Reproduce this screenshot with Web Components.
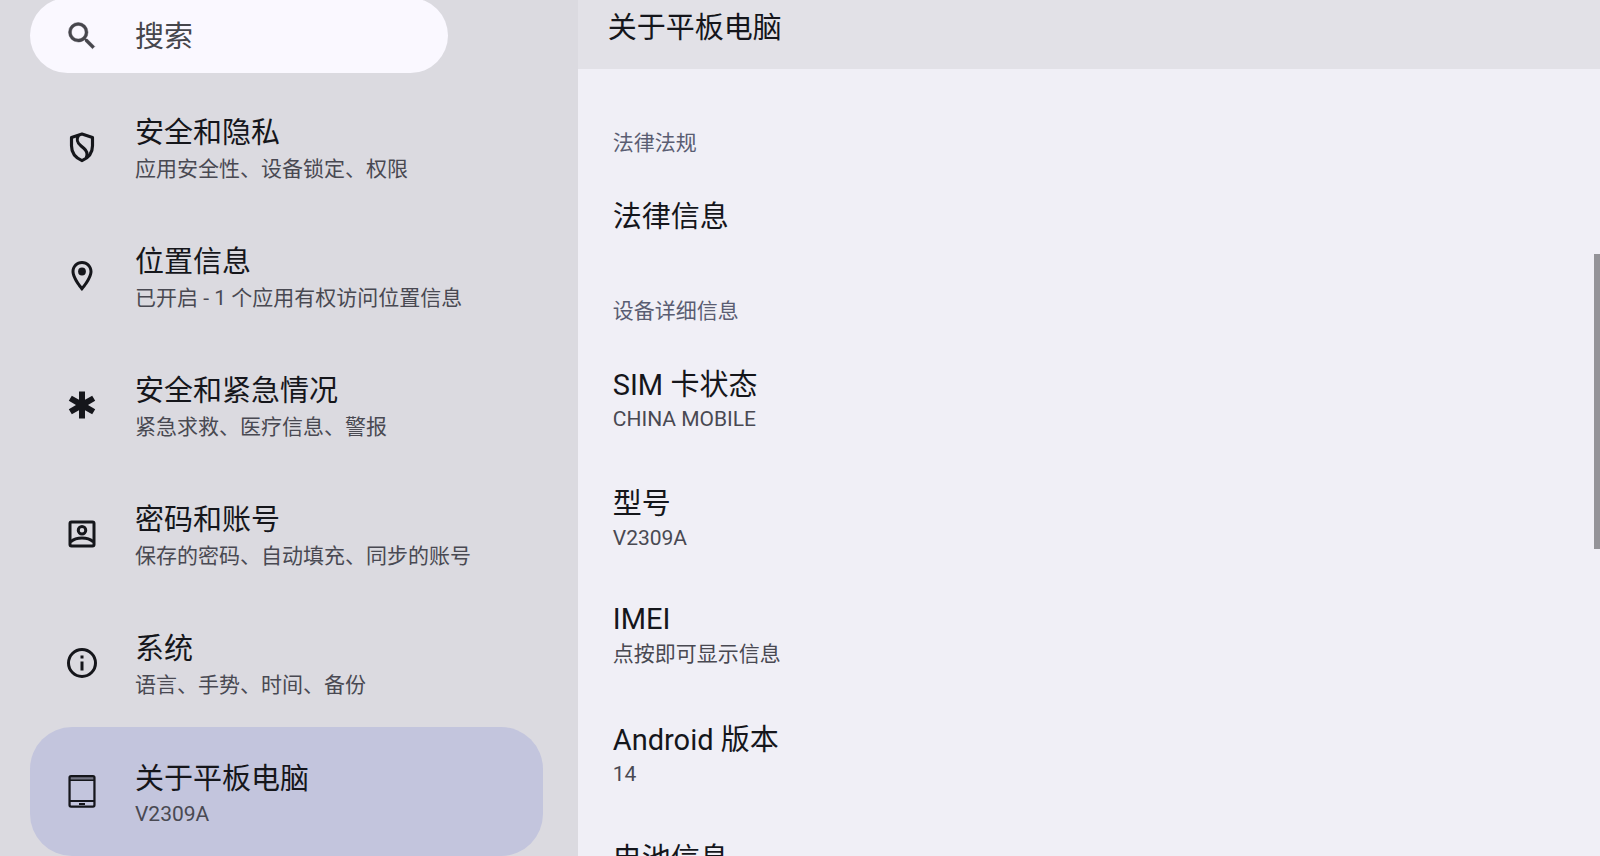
<!DOCTYPE html>
<html lang="zh-CN">
<head>
<meta charset="utf-8">
<meta name="viewport" content="width=device-width, initial-scale=1">
<title>关于平板电脑</title>
<style>
  html, body { margin: 0; height: 100%; overflow: hidden; }
  body {
    --title: 29px;
    --body: 21px;
    --ink: #15161b;
    --muted: #494952;
    font-family: Roboto, "Noto Sans CJK SC", sans-serif;
    color: var(--ink);
  }
</style>
</head>
<body>
<settings-app>
  <settings-search slot="side" label="搜索"></settings-search>
  <nav-item slot="side" icon="shield" heading="安全和隐私">应用安全性、设备锁定、权限</nav-item>
  <nav-item slot="side" icon="pin" heading="位置信息">已开启 - 1 个应用有权访问位置信息</nav-item>
  <nav-item slot="side" icon="emergency" heading="安全和紧急情况">紧急求救、医疗信息、警报</nav-item>
  <nav-item slot="side" icon="account" heading="密码和账号">保存的密码、自动填充、同步的账号</nav-item>
  <nav-item slot="side" icon="info" heading="系统">语言、手势、时间、备份</nav-item>
  <nav-item slot="side" icon="tablet" heading="关于平板电脑" selected latin-note>V2309A</nav-item>

  <span slot="heading">关于平板电脑</span>
  <pref-section label="法律法规">
    <pref-row heading="法律信息"></pref-row>
  </pref-section>
  <pref-section label="设备详细信息">
    <pref-row heading="SIM 卡状态" latin-note>CHINA MOBILE</pref-row>
    <pref-row heading="型号" latin-note>V2309A</pref-row>
    <pref-row heading="IMEI" latin-heading>点按即可显示信息</pref-row>
    <pref-row heading="Android 版本" latin-note>14</pref-row>
    <pref-row heading="电池信息"></pref-row>
  </pref-section>
</settings-app>

<script>
const ICONS = {
  search: '<path fill="currentColor" stroke="currentColor" stroke-width=".3" d="M15.5 14h-.79l-.28-.27A6.47 6.47 0 0 0 16 9.5 6.5 6.5 0 1 0 9.5 16c1.61 0 3.09-.59 4.23-1.57l.27.28v.79l5 4.99L20.49 19l-4.99-5zm-6 0C7.01 14 5 11.99 5 9.5S7.01 5 9.5 5 14 7.01 14 9.5 11.99 14 9.5 14z"/>',
  shield: '<g fill="none" stroke="currentColor" stroke-width="2.100" stroke-linejoin="round"><path d="M12 3.400 5 5.600v5.600c0 4.600 2.600 8 7 9.900 4.400-1.900 7-5.300 7-9.900V5.600z"/><path d="M9.600 4.200c-1.500 3.100-1 5 1.800 7.200l1.800 1.400c2.300 1.900 2.900 3.500 1.700 6.300"/></g>',
  pin: '<path fill="currentColor" d="M12 2C8.13 2 5 5.13 5 9c0 5.25 7 13 7 13s7-7.75 7-13c0-3.87-3.13-7-7-7zM7 9c0-2.76 2.24-5 5-5s5 2.24 5 5c0 2.88-2.88 7.19-5 9.88C9.92 16.21 7 11.85 7 9z"/><circle cx="12" cy="9" r="2.6" fill="currentColor"/>',
  emergency: '<path fill="currentColor" d="M20.79 9.23l-2-3.46L14 8.54V3h-4v5.54L5.21 5.77l-2 3.46L8 12l-4.79 2.77 2 3.46L10 15.46V21h4v-5.54l4.79 2.77 2-3.46L16 12z"/>',
  account: '<g fill="none" stroke="currentColor" stroke-width="2"><rect x="4" y="4" width="16" height="16" rx="1"/><circle cx="12" cy="9.5" r="2.5"/><path d="M4.4 17.2C6.300 15.600 9 14.700 12 14.700s5.700.9 7.600 2.500"/></g>',
  info: '<circle cx="12" cy="12" r="9" fill="none" stroke="currentColor" stroke-width="2"/><path fill="currentColor" d="M11 7h2v2h-2zm0 4h2v6h-2z"/>',
  tablet: '<rect x="3.700" y="1.400" width="16.600" height="20.300" rx="1" fill="none" stroke="currentColor" stroke-width="1.500"/><path fill="currentColor" fill-opacity=".45" d="M4 2h16v2H4z"/><path fill="currentColor" d="M3.500 3.600h17v1.100h-17zm0 13.700h17v1.300h-17zM10 19.400h4v1.200h-4z"/>'
};

const svg = name => `<svg viewBox="0 0 24 24" aria-hidden="true">${ICONS[name]}</svg>`;

// Heading and note lines, shared by the navigation and the preference rows.
const textCss = `
  .heading, .note { display: block; white-space: nowrap; }
  .heading { font-size: var(--title); line-height: 42px; color: var(--ink); }
  .note { font-size: var(--body); line-height: 28px; color: var(--muted); }
  :host([latin-note]) .note { line-height: 26px; }
`;

class Base extends HTMLElement {
  connectedCallback() {
    if (!this.shadowRoot) this.attachShadow({ mode: 'open' }).innerHTML = this.render();
  }
}

customElements.define('settings-app', class extends Base {
  render() {
    return `<style>
      :host { display: grid; grid-template-columns: 13fr 23fr; height: 100vh; overflow: hidden; background: #f0eff6; }
      nav { background: #dbdae0; overflow: hidden; }
      main { position: relative; overflow: hidden; }
      header { box-sizing: border-box; height: 69px; padding: 7px 30px 0; background: #e2e1e7; }
      h1 { margin: 0; font-size: var(--title); line-height: 42px; font-weight: 400; }
      .body { padding-top: 27px; }
      .thumb { position: absolute; right: 0; top: 254px; width: 6px; height: 295px; background: #949398; }
    </style>
    <nav><slot name="side"></slot></nav>
    <main>
      <header><h1><slot name="heading"></slot></h1></header>
      <div class="body"><slot></slot></div>
      <div class="thumb"></div>
    </main>`;
  }
});

customElements.define('settings-search', class extends Base {
  render() {
    const label = this.getAttribute('label');
    return `<style>
      :host { display: block; margin: -2px 130px 9px 30px; }
      label { display: flex; align-items: center; gap: 35px; height: 75px; padding: 0 34px; border-radius: 38px; background: #faf8ff; color: #46464c; }
      svg { width: 36px; height: 36px; flex: none; }
      input { flex: 1; min-width: 0; height: 42px; border: 0; padding: 2px 0 0; outline: 0; background: none; font: inherit; font-size: var(--title); color: inherit; }
      input::placeholder { color: #46464c; opacity: 1; }
    </style>
    <label>${svg('search')}<input type="search" placeholder="${label}" aria-label="${label}"></label>`;
  }
});

customElements.define('nav-item', class extends Base {
  render() {
    return `<style>
      :host { display: block; margin: 0 35px 0 30px; }
      a { display: flex; align-items: center; gap: 35px; height: 129px; padding: 0 34px; border-radius: 42px; color: inherit; text-decoration: none; }
      :host([selected]) a { background: #c3c5dd; }
      svg { width: 36px; height: 36px; flex: none; }
      .text { padding-top: 3px; }
      ${textCss}
      .note { line-height: 30px; }
      :host([latin-note]) .note { line-height: 28px; }
    </style>
    <a href="#${this.getAttribute('icon')}"${this.hasAttribute('selected') ? ' aria-current="page"' : ''}>
      ${svg(this.getAttribute('icon'))}
      <span class="text"><span class="heading">${this.getAttribute('heading')}</span><span class="note"><slot></slot></span></span>
    </a>`;
  }
});

customElements.define('pref-section', class extends Base {
  render() {
    return `<style>
      :host { display: block; }
      h2 { margin: 0; padding: 34px 35px 15px; font-size: var(--body); line-height: 26px; font-weight: 400; color: #5a5d72; }
    </style>
    <section><h2>${this.getAttribute('label')}</h2><slot></slot></section>`;
  }
});

customElements.define('pref-row', class extends Base {
  render() {
    const note = this.textContent.trim() ? '<span class="note"><slot></slot></span>' : '';
    return `<style>
      :host { display: block; }
      button { display: block; width: 100%; border: 0; margin: 0; padding: 25px 35px 26px; background: none; font: inherit; text-align: left; }
      :host([latin-heading]) button { padding-top: 21px; }
      ${textCss}
    </style>
    <button type="button"><span class="heading">${this.getAttribute('heading')}</span>${note}</button>`;
  }
});
</script>
</body>
</html>
